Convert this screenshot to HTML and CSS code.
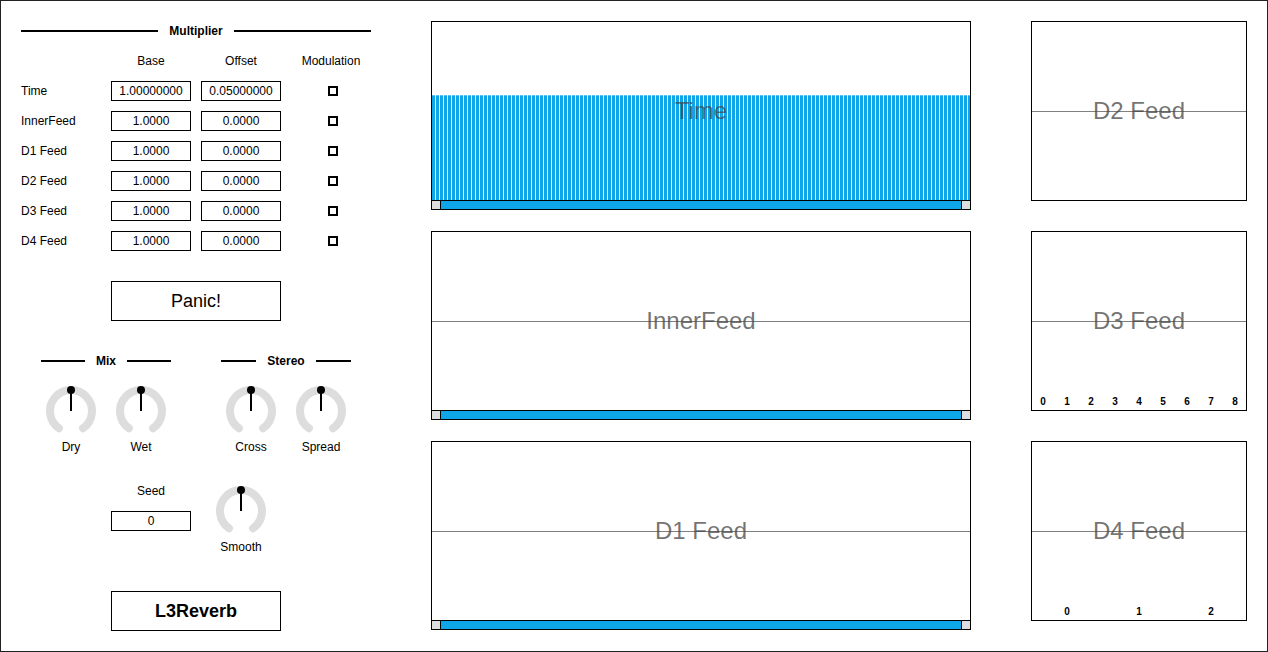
FILE: index.html
```html
<!DOCTYPE html>
<html>
<head>
<meta charset="utf-8">
<link rel="stylesheet" href="styles.css">
</head>
<body>
<div class="app">
  <aside class="controls">
    <div class="mult-grid">
      <div class="section-title full">Multiplier</div>
      <div></div>
      <div class="colhead">Base</div>
      <div class="colhead">Offset</div>
      <div class="colhead">Modulation</div>

      <div class="rowlabel">Time</div>
      <input class="num" type="text" value="1.00000000">
      <input class="num" type="text" value="0.05000000">
      <span class="check"></span>

      <div class="rowlabel">InnerFeed</div>
      <input class="num" type="text" value="1.0000">
      <input class="num" type="text" value="0.0000">
      <span class="check"></span>

      <div class="rowlabel">D1 Feed</div>
      <input class="num" type="text" value="1.0000">
      <input class="num" type="text" value="0.0000">
      <span class="check"></span>

      <div class="rowlabel">D2 Feed</div>
      <input class="num" type="text" value="1.0000">
      <input class="num" type="text" value="0.0000">
      <span class="check"></span>

      <div class="rowlabel">D3 Feed</div>
      <input class="num" type="text" value="1.0000">
      <input class="num" type="text" value="0.0000">
      <span class="check"></span>

      <div class="rowlabel">D4 Feed</div>
      <input class="num" type="text" value="1.0000">
      <input class="num" type="text" value="0.0000">
      <span class="check"></span>
    </div>

    <button class="big-btn panic">Panic!</button>

    <div class="knob-sections">
      <section class="knob-group">
        <div class="section-title">Mix</div>
        <div class="knobs">
          <div class="knob">
            <svg class="knob-svg" viewBox="0 0 50 50" width="50" height="50"><path class="ring" d="M12.95 42.2 A21 21 0 1 1 37.05 42.2"/><line class="pointer" x1="25" y1="25" x2="25" y2="4"/><circle cx="25" cy="4" r="4"/></svg>
            <div class="knob-label">Dry</div>
          </div>
          <div class="knob">
            <svg class="knob-svg" viewBox="0 0 50 50" width="50" height="50"><path class="ring" d="M12.95 42.2 A21 21 0 1 1 37.05 42.2"/><line class="pointer" x1="25" y1="25" x2="25" y2="4"/><circle cx="25" cy="4" r="4"/></svg>
            <div class="knob-label">Wet</div>
          </div>
        </div>
      </section>
      <section class="knob-group">
        <div class="section-title">Stereo</div>
        <div class="knobs">
          <div class="knob">
            <svg class="knob-svg" viewBox="0 0 50 50" width="50" height="50"><path class="ring" d="M12.95 42.2 A21 21 0 1 1 37.05 42.2"/><line class="pointer" x1="25" y1="25" x2="25" y2="4"/><circle cx="25" cy="4" r="4"/></svg>
            <div class="knob-label">Cross</div>
          </div>
          <div class="knob">
            <svg class="knob-svg" viewBox="0 0 50 50" width="50" height="50"><path class="ring" d="M12.95 42.2 A21 21 0 1 1 37.05 42.2"/><line class="pointer" x1="25" y1="25" x2="25" y2="4"/><circle cx="25" cy="4" r="4"/></svg>
            <div class="knob-label">Spread</div>
          </div>
        </div>
      </section>
    </div>

    <div class="seed-row">
      <div class="seed">
        <div class="seed-label">Seed</div>
        <input class="num" type="text" value="0">
      </div>
      <div class="knob">
        <svg class="knob-svg" viewBox="0 0 50 50" width="50" height="50"><path class="ring" d="M12.95 42.2 A21 21 0 1 1 37.05 42.2"/><line class="pointer" x1="25" y1="25" x2="25" y2="4"/><circle cx="25" cy="4" r="4"/></svg>
        <div class="knob-label">Smooth</div>
      </div>
    </div>

    <button class="big-btn brand">L3Reverb</button>
  </aside>

  <main class="graphs">
    <div class="graph">
      <div class="plot">
        <div class="midline"></div>
        <div class="bars" style="height:105px"></div>
        <div class="graph-title">Time</div>
      </div>
      <div class="scrollbar"><span class="sb-end left"></span><span class="sb-thumb"></span><span class="sb-end right"></span></div>
    </div>
    <div class="graph">
      <div class="plot">
        <div class="midline"></div>
        <div class="graph-title">InnerFeed</div>
      </div>
      <div class="scrollbar"><span class="sb-end left"></span><span class="sb-thumb"></span><span class="sb-end right"></span></div>
    </div>
    <div class="graph">
      <div class="plot">
        <div class="midline"></div>
        <div class="graph-title">D1 Feed</div>
      </div>
      <div class="scrollbar"><span class="sb-end left"></span><span class="sb-thumb"></span><span class="sb-end right"></span></div>
    </div>
  </main>

  <div class="side-graphs">
    <div class="side-graph">
      <div class="plot">
        <div class="midline"></div>
        <div class="graph-title">D2 Feed</div>
      </div>
    </div>
    <div class="side-graph">
      <div class="plot">
        <div class="midline"></div>
        <div class="graph-title">D3 Feed</div>
        <div class="axis">
          <span>0</span><span>1</span><span>2</span><span>3</span><span>4</span><span>5</span><span>6</span><span>7</span><span>8</span>
        </div>
      </div>
    </div>
    <div class="side-graph">
      <div class="plot">
        <div class="midline"></div>
        <div class="graph-title">D4 Feed</div>
        <div class="axis wide">
          <span>0</span><span>1</span><span>2</span>
        </div>
      </div>
    </div>
  </div>
</div>
</body>
</html>
```

FILE: styles.css
```css
* { box-sizing: border-box; }

html, body {
  margin: 0;
  padding: 0;
  background: #fff;
}

body {
  font-family: "Liberation Sans", Arial, sans-serif;
  font-size: 12px;
  color: #000;
}

.app {
  width: 1268px;
  height: 652px;
  border: 1px solid #222;
  padding: 20px;
  display: flex;
  gap: 60px;
}

/* ---------- left controls ---------- */
.controls {
  width: 350px;
  flex: none;
  display: flex;
  flex-direction: column;
}

.mult-grid {
  display: grid;
  grid-template-columns: 80px 80px 80px 80px;
  grid-auto-rows: 20px;
  column-gap: 10px;
  row-gap: 10px;
}

.section-title {
  display: flex;
  align-items: center;
  height: 20px;
  font-weight: bold;
  font-size: 12px;
  line-height: 20px;
}
.section-title::before,
.section-title::after {
  content: "";
  flex: 1;
  height: 2px;
  background: #000;
}
.section-title::before { margin-right: 11px; }
.section-title::after { margin-left: 11px; }

.full { grid-column: 1 / -1; }

.colhead {
  text-align: center;
  line-height: 20px;
}

.rowlabel {
  line-height: 20px;
  white-space: nowrap;
}

.num {
  width: 80px;
  height: 20px;
  margin: 0;
  padding: 0;
  border: 1px solid #000;
  border-radius: 0;
  background: #fff;
  font-family: "Liberation Sans", Arial, sans-serif;
  font-size: 12px;
  color: #000;
  text-align: center;
  outline: none;
}

.check {
  align-self: center;
  justify-self: start;
  margin-left: 37px;
  width: 10px;
  height: 10px;
  border: 2px solid #000;
  background: #fff;
}

.big-btn {
  margin: 0 0 0 90px;
  width: 170px;
  height: 40px;
  padding: 0;
  border: 1px solid #000;
  border-radius: 0;
  background: #fff;
  color: #000;
  font-family: "Liberation Sans", Arial, sans-serif;
  font-size: 18px;
}
.panic { margin-top: 30px; }
.brand {
  margin-top: 35px;
  font-weight: bold;
}

.knob-sections {
  margin-top: 30px;
  padding-left: 20px;
  display: flex;
  gap: 50px;
}
.knob-group {
  width: 130px;
  display: flex;
  flex-direction: column;
}
.knobs {
  margin-top: 10px;
  display: flex;
  gap: 10px;
}

.knob {
  width: 60px;
  display: flex;
  flex-direction: column;
  align-items: center;
}
.knob-svg {
  display: block;
  margin-top: 5px;
  overflow: visible;
}
.knob-svg .ring {
  fill: none;
  stroke: #dddddd;
  stroke-width: 8;
  stroke-linecap: round;
}
.knob-svg .pointer {
  stroke: #000;
  stroke-width: 2;
}
.knob-svg circle { fill: #000; }
.knob-label {
  height: 20px;
  padding-top: 1px;
  line-height: 20px;
  text-align: center;
}

.seed-row {
  margin-top: 25px;
  padding-left: 90px;
  display: flex;
  gap: 20px;
}
.seed {
  width: 80px;
  display: flex;
  flex-direction: column;
  gap: 10px;
}
.seed-label {
  height: 20px;
  line-height: 20px;
  text-align: center;
}

/* ---------- graphs ---------- */
.graphs {
  width: 540px;
  flex: none;
  display: flex;
  flex-direction: column;
  gap: 21px;
}

.graph {
  height: 189px;
  border: 1px solid #000;
  display: flex;
  flex-direction: column;
}

.plot {
  position: relative;
  height: 178px;
  flex: none;
  display: flex;
  align-items: center;
  justify-content: center;
  overflow: hidden;
}

.midline {
  position: absolute;
  left: 0;
  right: 0;
  top: 89px;
  height: 1px;
  background: #808080;
}

.bars {
  position: absolute;
  left: 0;
  right: 0;
  bottom: 0;
  background:
    linear-gradient(to bottom, rgba(255,255,255,0.3) 0 1px, transparent 1px),
    repeating-linear-gradient(to right, #0ea5e9 0 3px, #ffffff 3px 4px);
}

.graph-title {
  position: relative;
  font-family: "Liberation Sans", Arial, sans-serif;
  font-size: 24px;
  line-height: 28px;
  color: rgba(70, 70, 70, 0.75);
}

.scrollbar {
  height: 9px;
  flex: none;
  border-top: 1px solid #000;
  display: flex;
}
.sb-end {
  width: 9px;
  background: #dddddd;
}
.sb-end.left { border-right: 1px solid #000; }
.sb-end.right { border-left: 1px solid #000; }
.sb-thumb {
  flex: 1;
  background: #0ea5e9;
}

.side-graphs {
  width: 216px;
  flex: none;
  display: grid;
  grid-template-rows: repeat(3, 189px);
  row-gap: 21px;
}
.side-graph {
  height: 180px;
  border: 1px solid #000;
}

.axis {
  position: absolute;
  left: 0;
  right: 0;
  bottom: 2px;
  display: flex;
  justify-content: center;
  font-size: 10px;
  font-weight: bold;
  line-height: 12px;
}
.axis span {
  flex: none;
  width: 24px;
  text-align: center;
}
.axis.wide span { width: 72px; }
```
